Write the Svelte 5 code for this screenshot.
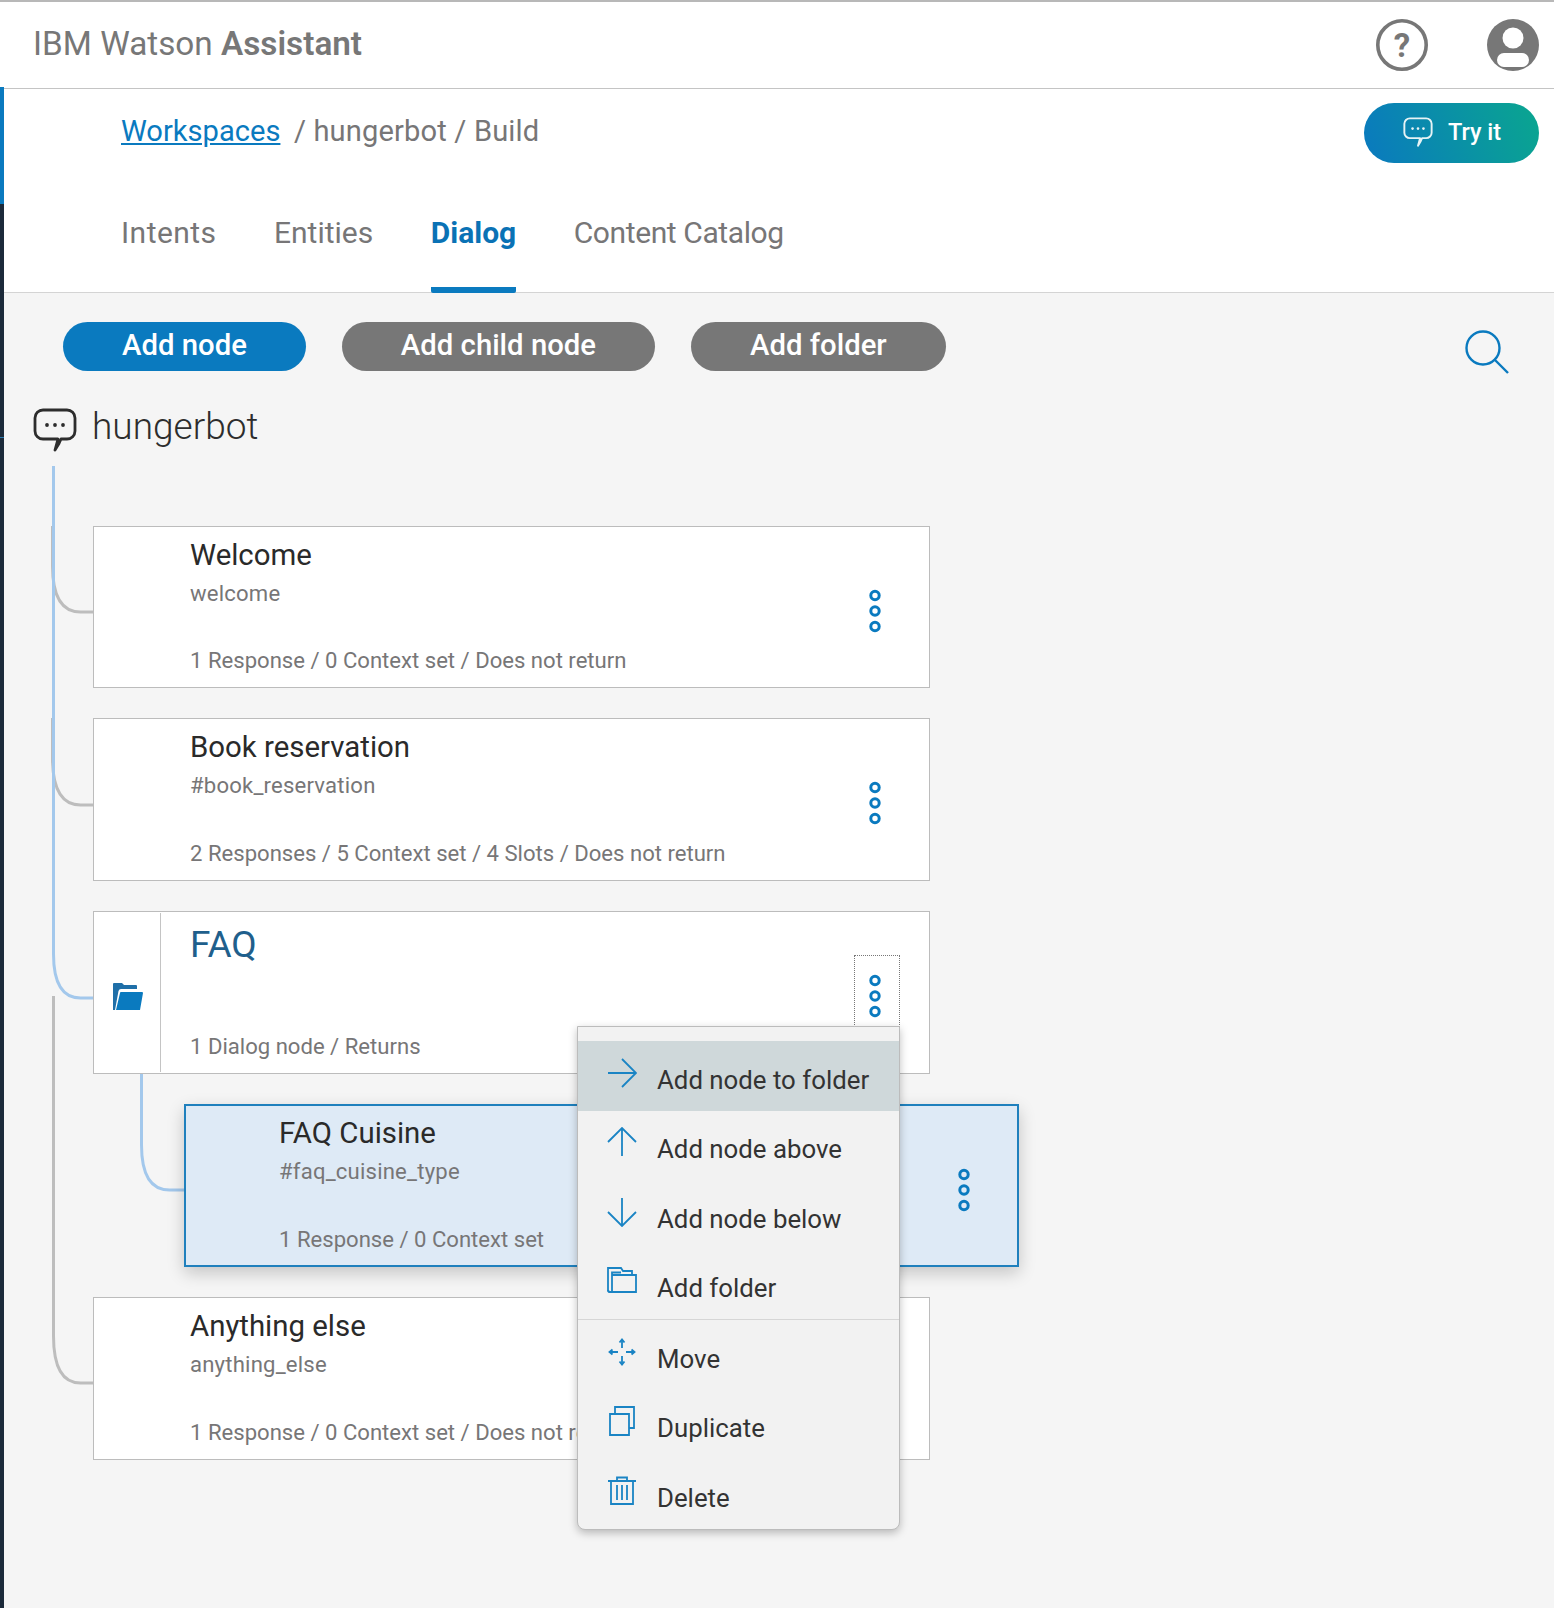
<script>
  const tabs = ['Intents', 'Entities', 'Dialog', 'Content Catalog'];
  const nodes = [
    { title: 'Welcome', sub: 'welcome', stats: '1 Response / 0 Context set / Does not return' },
    { title: 'Book reservation', sub: '#book_reservation', stats: '2 Responses / 5 Context set / 4 Slots / Does not return' },
    { title: 'FAQ', sub: '', stats: '1 Dialog node / Returns', folder: true },
    { title: 'FAQ Cuisine', sub: '#faq_cuisine_type', stats: '1 Response / 0 Context set', child: true },
    { title: 'Anything else', sub: 'anything_else', stats: '1 Response / 0 Context set / Does not return' }
  ];
  const menuTop = [
    { label: 'Add node to folder', icon: 'right', active: true },
    { label: 'Add node above', icon: 'up' },
    { label: 'Add node below', icon: 'down' },
    { label: 'Add folder', icon: 'folder' }
  ];
  const menuBottom = [
    { label: 'Move', icon: 'move' },
    { label: 'Duplicate', icon: 'copy' },
    { label: 'Delete', icon: 'trash' }
  ];
</script>

{#snippet bubble(cls)}
  <svg class={cls} viewBox="0 0 44 44" fill="none" stroke="currentColor" stroke-width="2.8">
    <path d="M10 2h24a8 8 0 0 1 8 8v13a8 8 0 0 1-8 8h-6l-2 4.500L22 42l3-11H10a8 8 0 0 1-8-8V10a8 8 0 0 1 8-8z" stroke-linejoin="round" />
    <circle cx="14" cy="17" r="1.900" fill="currentColor" stroke="none" />
    <circle cx="22" cy="17" r="1.900" fill="currentColor" stroke="none" />
    <circle cx="30" cy="17" r="1.900" fill="currentColor" stroke="none" />
  </svg>
{/snippet}

{#snippet kebab()}
  <svg class="kebab" viewBox="0 0 14 44" fill="none" stroke="#0a7abf" stroke-width="3">
    <circle cx="7" cy="6.500" r="4.200" />
    <circle cx="7" cy="22" r="4.200" />
    <circle cx="7" cy="37.500" r="4.200" />
  </svg>
{/snippet}

{#snippet menuIcon(name)}
  <svg class="micon" viewBox="0 0 30 30" fill="none" stroke="#1a84c4" stroke-width="1.800">
    {#if name === 'right'}
      <path d="M1 15h28M15 1l14 14-14 14" />
    {:else if name === 'up'}
      <path d="M15 29V1M1 15 15 1l14 14" />
    {:else if name === 'down'}
      <path d="M15 1v28M1 15l14 14 14-14" />
    {:else if name === 'folder'}
      <path d="M3 26a2 2 0 0 1-2-2V2h13l2 3h9v4" />
      <path d="M5 9h24v17H5zM5 9V6.500h9" />
      <path d="M1 24a2 2 0 0 0 2 2h3" />
    {:else if name === 'move'}
      <path d="M15 3v8M15 19v8M3 15h8M19 15h8" />
      <path d="M12.500 5.500 15 2.500l2.500 3M12.500 24.500l2.500 3 2.500-3M5.500 12.500l-3 2.500 3 2.500M24.500 12.500l3 2.500-3 2.500" />
    {:else if name === 'copy'}
      <path d="M3 8h19v21H3z" />
      <path d="M8 8V1h19v21h-5" />
    {:else if name === 'trash'}
      <path d="M1 5h28M10 5V1.500h10V5M4 5v23h22V5M10 9v15M15 9v15M20 9v15" />
    {/if}
  </svg>
{/snippet}

<header class="topbar">
  <div class="brand">IBM Watson <b>Assistant</b></div>
  <div class="top-icons">
    <svg class="round" viewBox="0 0 52 52">
      <circle cx="26" cy="26" r="24.200" fill="none" stroke="#777" stroke-width="3.600" />
      <text x="26" y="37.500" text-anchor="middle" class="qmark">?</text>
    </svg>
    <svg class="round" viewBox="0 0 52 52">
      <circle cx="26" cy="26" r="26" fill="#777" />
      <circle cx="26" cy="19" r="10.500" fill="#fff" />
      <rect x="10" y="34" width="32" height="14" rx="7" fill="#fff" />
    </svg>
  </div>
</header>

<div class="shell">
  <aside class="strip"></aside>
  <main>
    <section class="head">
      <div class="crumbs">
        <div class="path"><a href="#top">Workspaces</a><span>/ hungerbot / Build</span></div>
        <button class="try">{@render bubble('try-icon')}Try it</button>
      </div>
      <nav class="tabs">
        {#each tabs as tab}
          <div class="tab" class:current={tab === 'Dialog'}>{tab}</div>
        {/each}
      </nav>
    </section>

    <section class="toolbar">
      <button class="pill primary">Add node</button>
      <button class="pill">Add child node</button>
      <button class="pill">Add folder</button>
      <svg class="search" viewBox="0 0 44 44" fill="none" stroke="#0a7abf" stroke-width="2.400">
        <circle cx="18" cy="18" r="16.500" />
        <path d="M30 30l13 13" />
      </svg>
    </section>

    <div class="bot">{@render bubble('bot-icon')}<span>hungerbot</span></div>

    <section class="tree">
      <svg class="lines" width="200" height="930" fill="none" stroke-width="3">
        <path d="M48.500 60v40q0 46 28 46h13M48.500 252v40q0 47 28 47h13" stroke="#bdbdbd" />
        <path d="M49.500 530v340q0 47 27 47h13" stroke="#bdbdbd" />
        <path d="M49.500 0v488q0 44 27 44h13" stroke="#a3c8ec" />
        <path d="M137.500 607v72q0 45 28 45h15" stroke="#a3c8ec" />
      </svg>
      {#each nodes as node}
        <article class="card" class:child={node.child} class:folder={node.folder}>
          {#if node.folder}
            <div class="folder-cell">
              <svg class="folder-icon" viewBox="0 0 30 28">
                <path d="M0 27V1q0-1 1-1h8l2 2h12q1 0 1 1v3H8q-2 0-2.500 2L2 27z" fill="#1f6fa8" />
                <path d="M8 9h21q1 0 1 1l-3 17H3L7 10q0-1 1-1z" fill="#0a7abf" />
              </svg>
            </div>
          {/if}
          <h3>{node.title}</h3>
          <p class="sub">{node.sub}</p>
          <p class="stats">{node.stats}</p>
          <div class="more" class:focus={node.folder}>{@render kebab()}</div>
        </article>
      {/each}

      <div class="menu">
        <ul>
          {#each menuTop as item}
            <li class:active={item.active}>{@render menuIcon(item.icon)}<span>{item.label}</span></li>
          {/each}
        </ul>
        <ul class="second">
          {#each menuBottom as item}
            <li>{@render menuIcon(item.icon)}<span>{item.label}</span></li>
          {/each}
        </ul>
      </div>
    </section>
  </main>
</div>

<style>
  :global(body) {
    margin: 0;
    background: #f5f5f5;
    font-family: "Roboto", "Noto Sans", sans-serif;
    color: #777677;
  }

  .topbar {
    height: 86px;
    box-sizing: content-box;
    border-top: 2px solid #b8b8b8;
    border-bottom: 1px solid #c4c4c4;
    background: #fff;
    display: flex;
    align-items: center;
    justify-content: space-between;
    padding: 0 15px 0 33px;
  }

  .brand {
    font-size: 33.300px;
    color: #777;
    position: relative;
    top: -2px;
  }

  .brand b {
    font-weight: 600;
  }

  .top-icons {
    display: flex;
    gap: 59px;
  }

  .round {
    width: 52px;
    height: 52px;
    display: block;
  }

  .qmark {
    font: 700 33px "Roboto", sans-serif;
    fill: #777;
  }

  .shell {
    display: flex;
    min-height: 1519px;
  }

  .strip {
    width: 4px;
    flex: none;
    margin-top: -2px;
    position: relative;
    background: linear-gradient(#0a7abf 0 117px, #1c2a3a 117px 350px, #2a7ab0 350px 351px, #1c2a3a 351px);
  }

  main {
    flex: 1;
    min-width: 0;
  }

  .head {
    background: #fff;
    height: 203px;
    border-bottom: 1px solid #d4d4d4;
    padding-left: 117px;
    box-sizing: content-box;
  }

  .crumbs {
    display: flex;
    justify-content: space-between;
    padding: 14px 15px 0 0;
    height: 88px;
  }

  .path {
    font-size: 29.100px;
    display: flex;
    gap: 13.500px;
    line-height: 56px;
  }

  .path span {
    letter-spacing: 0.150px;
  }

  .path a {
    color: #0a7abf;
  }

  .try {
    width: 175px;
    height: 60px;
    border: 0;
    border-radius: 30px;
    background: linear-gradient(70deg, #0a79bf, #0aa68f);
    color: #fff;
    font: 500 23.500px "Roboto", sans-serif;
    display: flex;
    align-items: center;
    justify-content: center;
    gap: 15px;
    padding: 0 0 2px 0;
  }

  .try-icon {
    width: 30px;
    height: 30px;
    color: #e6f3f5;
    margin-left: 1px;
  }

  .tabs {
    display: flex;
    gap: 57.500px;
  }

  .tab {
    font-size: 30px;
    height: 102px;
    line-height: 84px;
    box-sizing: border-box;
  }

  .tab:first-child {
    letter-spacing: 0.450px;
  }

  .tab:last-child {
    letter-spacing: -0.400px;
  }

  .tab.current {
    color: #0a72b5;
    font-weight: 700;
    border-bottom: 6px solid #0a7abf;
    border-radius: 0 0 2px 2px;
  }

  .toolbar {
    display: flex;
    align-items: flex-start;
    gap: 36px;
    padding: 29px 46px 0 59px;
    height: 56px;
    position: relative;
  }

  .pill {
    height: 49px;
    border: 0;
    border-radius: 25px;
    background: #777;
    color: #fff;
    font: 500 29.300px "Roboto", sans-serif;
    padding: 0 59px 4px;
  }

  .pill.primary {
    background: #0a7abf;
  }

  .search {
    width: 44px;
    height: 44px;
    margin: 8px -1px 0 auto;
  }

  .bot {
    display: flex;
    align-items: center;
    gap: 15px;
    padding: 8px 0 0 29px;
    font-size: 37px;
    font-weight: 300;
    color: #2d2d2d;
    height: 80px;
  }

  .bot-icon {
    width: 44px;
    height: 44px;
    color: #2d2d2d;
    margin-top: 8px;
  }

  .tree {
    position: relative;
    display: flex;
    flex-direction: column;
    gap: 29.500px;
    padding: 60px 0 0 89px;
    width: 837px;
  }

  .lines {
    position: absolute;
    left: 0;
    top: 0;
  }

  .card {
    position: relative;
    width: 837px;
    height: 163px;
    box-sizing: border-box;
    border: 1px solid #bcbcbc;
    background: #fff;
    padding: 5px 0 0 96px;
  }

  .card:first-of-type {
    height: 162px;
  }

  .card.folder {
    margin-top: 1px;
  }

  .card.child {
    margin-left: 91px;
    margin-bottom: 1px;
    width: 835px;
    background: #deeaf6;
    border: 2px solid #1f80bd;
    padding: 4px 0 0 93px;
    box-shadow: 0 6px 16px rgba(0, 0, 0, 0.2);
    z-index: 2;
  }

  .child .stats {
    left: 93px;
    bottom: 11px;
  }

  .child .more {
    right: 46px;
  }

  .folder-cell {
    position: absolute;
    left: 0;
    top: 1px;
    bottom: 1px;
    width: 66px;
    border-right: 1px solid #c4c4c4;
    display: flex;
    align-items: center;
    justify-content: center;
  }

  .folder-icon {
    width: 30px;
    height: 28px;
    margin: 8px 0 0 1px;
  }

  h3 {
    margin: 0;
    font-size: 29.400px;
    font-weight: 400;
    line-height: 46px;
    color: #2a2a2a;
  }

  .folder h3 {
    font-size: 37px;
    color: #1f5f8c;
    line-height: 56px;
  }

  p {
    margin: 0;
    font-size: 22.100px;
  }

  .sub {
    line-height: 30px;
    letter-spacing: 0.200px;
  }

  .stats {
    position: absolute;
    left: 96px;
    bottom: 12px;
    line-height: 30px;
    white-space: nowrap;
  }

  .more {
    position: absolute;
    right: 47px;
    top: 62px;
    width: 14px;
    height: 44px;
  }

  .more.focus {
    right: 30px;
    top: 44px;
    width: 44px;
    height: 74px;
    outline: 1px dotted #777;
    box-sizing: border-box;
    padding: 18px 17px 18px 13px;
    margin: 0;
  }

  .kebab {
    display: block;
    width: 14px;
    height: 44px;
  }

  .menu {
    position: absolute;
    z-index: 5;
    left: 573px;
    top: 560px;
    width: 323px;
    height: 504px;
    box-sizing: border-box;
    background: #f2f2f2;
    border: 1px solid #bcbcbc;
    border-radius: 0 0 8px 8px;
    padding-top: 14px;
    box-shadow: 0 3px 8px rgba(0, 0, 0, 0.25);
  }

  ul {
    list-style: none;
    margin: 0;
    padding: 0;
  }

  .second {
    border-top: 1px solid #d6d6d6;
  }

  li {
    height: 69.500px;
    padding-left: 29px;
    display: flex;
    align-items: center;
    gap: 20px;
    font-size: 25.800px;
    color: #333;
  }

  li span {
    padding-top: 8px;
  }

  li.active {
    background: #cfd8da;
  }

  .micon {
    width: 30px;
    height: 30px;
    flex: none;
    margin-top: -6px;
  }
</style>
